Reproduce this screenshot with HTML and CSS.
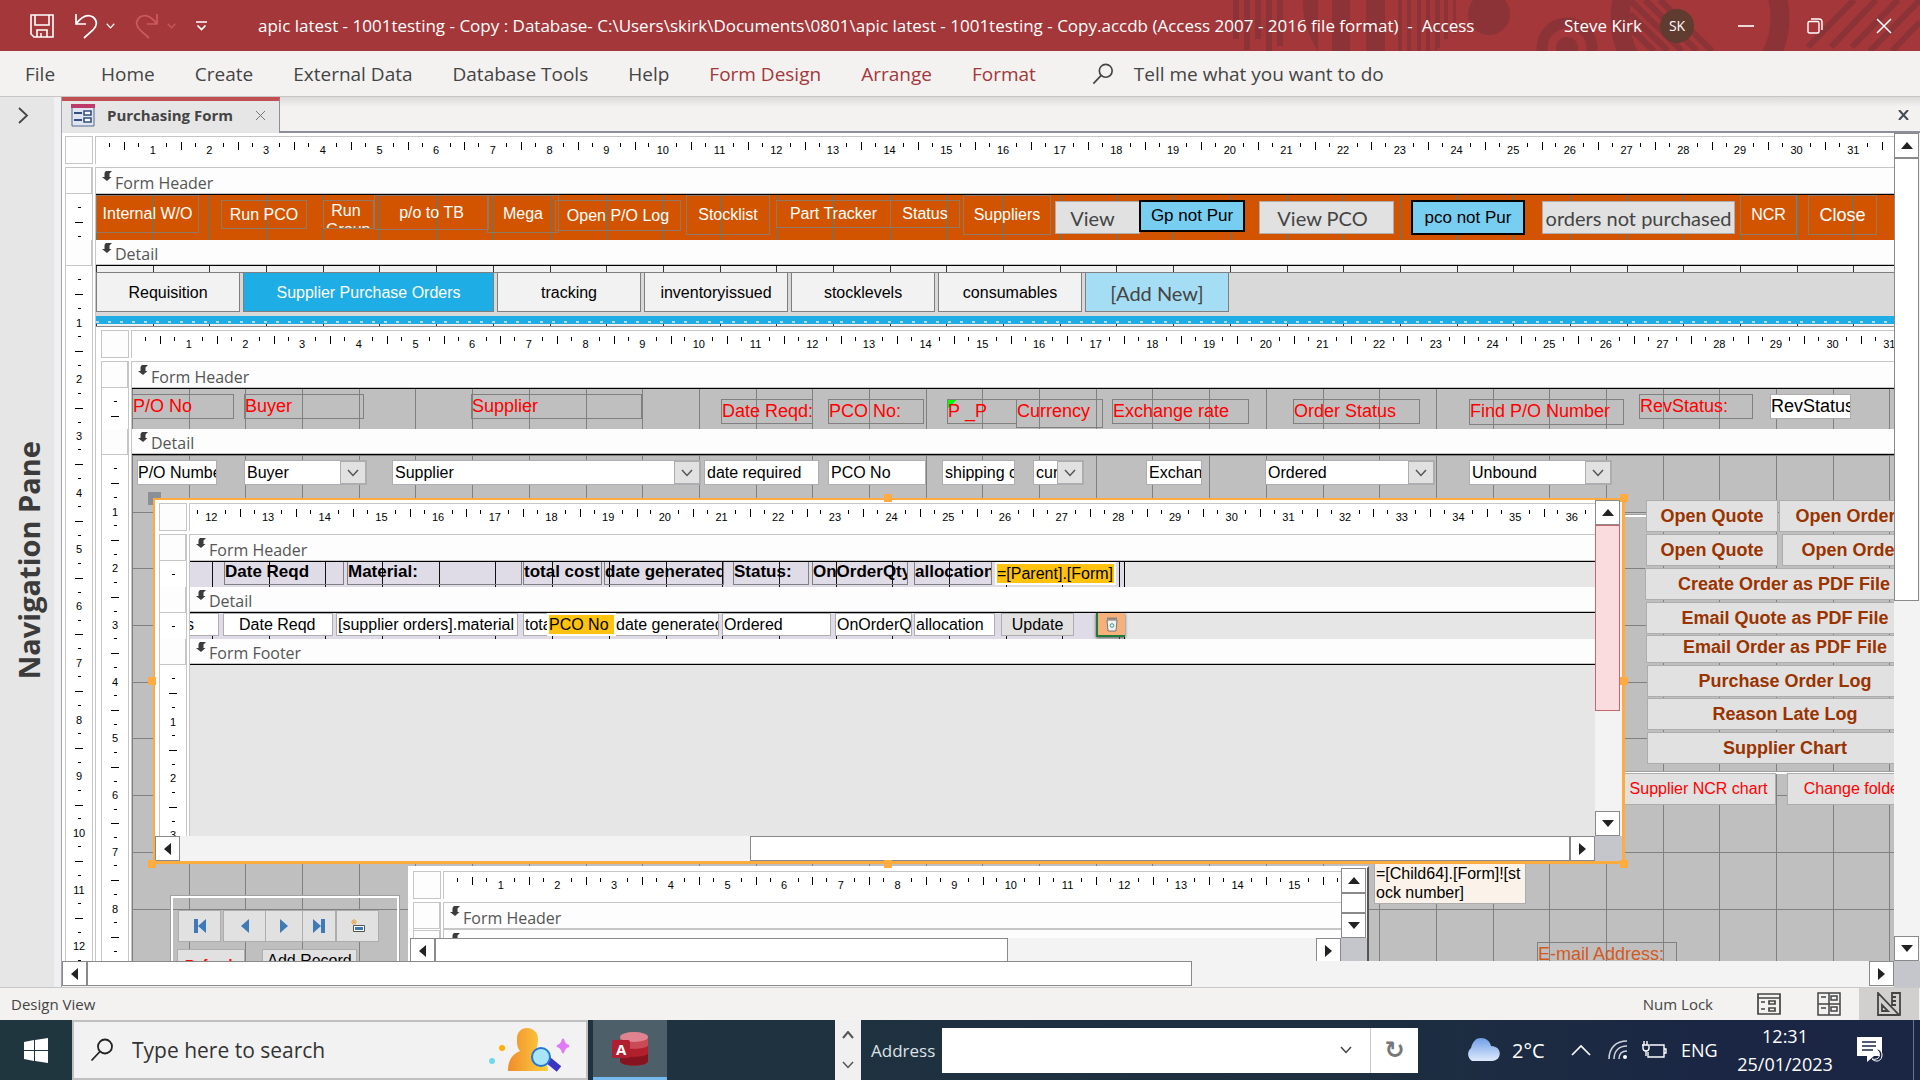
FILE: index.html
```html
<!DOCTYPE html>
<html lang="en">
<head>
<meta charset="utf-8">
<title>Purchasing Form - Access</title>
<link rel="stylesheet" href="styles.css">
</head>
<body>
<svg class="defs" aria-hidden="true">
  <symbol id="sel" viewBox="0 0 10 10"><path d="M4 0h6L7.500 2.500V6H9.500L5 10 0 6H2.500V2.500Q2.500 1 4 0Z" fill="#3b3b3b"/></symbol>
  <symbol id="up" viewBox="0 0 12 7"><path d="M6 0l6 7H0z" fill="#222"/></symbol>
  <symbol id="down" viewBox="0 0 12 7"><path d="M6 7L0 0h12z" fill="#222"/></symbol>
  <symbol id="left" viewBox="0 0 7 12"><path d="M0 6l7-6v12z" fill="#222"/></symbol>
  <symbol id="right" viewBox="0 0 7 12"><path d="M7 6L0 0v12z" fill="#222"/></symbol>
  <symbol id="chev" viewBox="0 0 12 8"><path d="M1 1l5 5.500L11 1" fill="none" stroke="currentColor" stroke-width="1.500"/></symbol>
  <symbol id="lens" viewBox="0 0 24 24"><circle cx="15" cy="8.500" r="7" fill="none" stroke="currentColor" stroke-width="1.800"/><path d="M10 13.500L1.500 22.500" stroke="currentColor" stroke-width="1.800"/></symbol>
</svg>

<header class="titlebar">
  <svg class="deco" width="690" height="51" viewBox="0 0 690 51" aria-hidden="true">
    <g fill="#8b3337"><path d="M3 0h6v39H3zM14 0h6v50h-6zM25 0h6v39h-6zM36 0h6v51h-6zM47 0h6v46h-6zM73 0h15v51C78 34 72 18 73 0zM102 0h18v51h-18zM136 0h19v51h-19zM168 0h4v51h-4zM177 0h4v51h-4zM187 0h4v51h-4zM196 0h4v51h-4zM205 0h5v47l-5 4zM214 0h4v39h-4zM223 0h3v34h-3z"/>
    <circle cx="259" cy="14" r="21"/><circle cx="337" cy="48" r="11"/></g>
    <g fill="none" stroke="#8b3337"><circle cx="337" cy="48" r="25" stroke-width="11"/><circle cx="470" cy="18" r="80" stroke-width="19"/>
    <g stroke-width="6"><path d="M400 0l52 51M415 0l52 51M430 0l52 51M400 14l38 37M400 28l24 23"/><path d="M578 47L624 0M601 47L646 0M622 47L668 0M640 51L690 0M662 51L690 22"/></g></g>
  </svg>
  <div class="qat">
    <button aria-label="Save"><svg width="24" height="24" viewBox="0 0 24 24"><path d="M1 1h22v22H4l-3-3zM5 1v10h14V1M7 23v-7h10v7M11 19v4" fill="none" stroke="#fff" stroke-width="1.600"/></svg></button>
    <button class="undo" aria-label="Undo"><svg width="24" height="26" viewBox="0 0 24 26"><path d="M2 1v10h10M2 11C8 3 14 1 19 4c5 4 4 9 0 13l-9 8" fill="none" stroke="#fff" stroke-width="1.700"/></svg><svg width="9" height="6"><use href="#chev"/></svg></button>
    <button class="redo" aria-label="Redo"><svg width="24" height="26" viewBox="0 0 24 26"><path d="M22 1v10H12M22 11C16 3 10 1 5 4c-5 4-4 9 0 13l9 8" fill="none" stroke="currentColor" stroke-width="1.700"/></svg><svg width="9" height="6"><use href="#chev"/></svg></button>
    <button aria-label="Customize Quick Access Toolbar"><svg width="11" height="10" viewBox="0 0 11 10"><path d="M0 1h11M1.500 4.500l4 4 4-4" fill="none" stroke="#fff" stroke-width="1.700"/></svg></button>
  </div>
  <h1 class="title">apic latest - 1001testing - Copy : Database- C:\Users\skirk\Documents\0801\apic latest - 1001testing - Copy.accdb (Access 2007 - 2016 file format) &nbsp;-&nbsp; Access</h1>
  <span class="user">Steve Kirk</span><span class="avatar">SK</span>
  <div class="winbtns">
    <button aria-label="Minimize"><svg width="16" height="16"><path d="M0 8h16" stroke="#fff" stroke-width="1.600"/></svg></button>
    <button aria-label="Restore"><svg width="16" height="16" viewBox="0 0 16 16"><path d="M1 5q0-1.500 1.500-1.500h8Q12 3.500 12 5v8.500q0 1.500-1.500 1.500h-8Q1 15 1 13.500zM4 1h8q3 0 3 3v8" fill="none" stroke="#fff" stroke-width="1.400"/></svg></button>
    <button aria-label="Close"><svg width="16" height="16"><path d="M1 1l14 14M15 1L1 15" stroke="#fff" stroke-width="1.500"/></svg></button>
  </div>
</header>

<nav class="ribbon">
  <a class="file" href="#">File</a><a href="#">Home</a><a href="#">Create</a><a href="#">External Data</a><a href="#">Database Tools</a><a href="#">Help</a><a class="ctx" href="#">Form Design</a><a class="ctx" href="#">Arrange</a><a class="ctx" href="#">Format</a>
  <button class="tell"><svg width="22" height="24"><use href="#lens"/></svg>Tell me what you want to do</button>
</nav>

<main class="work">
  <aside class="navpane">
    <button aria-label="Open Navigation Pane"><svg width="11" height="17" viewBox="0 0 11 17"><path d="M1 1l8 7.500L1 16" fill="none" stroke="#444" stroke-width="1.800"/></svg></button>
    <span>Navigation Pane</span>
  </aside>
  <section class="doc">
    <div class="tabstrip">
      <div class="doctab">
        <svg width="24" height="23" viewBox="0 0 24 23"><path d="M1 1h22v21H1z" fill="#dfe6f2" stroke="#55688f"/><path d="M0 0h24v4H0z" fill="#bd3a6b"/><path d="M3 9h8M3 16h8" stroke="#35507f" stroke-width="2"/><path d="M13 7h7v4h-7zM13 14h7v4h-7z" fill="#fff" stroke="#35507f" stroke-width="1.600"/></svg>
        <b>Purchasing Form</b>
        <button aria-label="Close tab"><svg width="11" height="11"><path d="M1 1l9 9M10 1L1 10" stroke="#777"/></svg></button>
      </div>
      <button class="closeall" aria-label="Close"><svg width="11" height="10"><path d="M1 0l9 10M10 0L1 10" stroke="#444a55" stroke-width="2"/></svg></button>
    </div>
    <div class="frame">
      <div class="form">
        <div class="hrow"><i class="corner"></i><div class="hruler"><span></span><span>1</span><span>2</span><span>3</span><span>4</span><span>5</span><span>6</span><span>7</span><span>8</span><span>9</span><span>10</span><span>11</span><span>12</span><span>13</span><span>14</span><span>15</span><span>16</span><span>17</span><span>18</span><span>19</span><span>20</span><span>21</span><span>22</span><span>23</span><span>24</span><span>25</span><span>26</span><span>27</span><span>28</span><span>29</span><span>30</span><span>31</span><span></span></div></div>
        <div class="sect">
          <div class="gutter"><i class="cell"></i><div class="vruler"><span></span><span></span></div></div>
          <div class="body">
            <div class="bar first"><svg><use href="#sel"/></svg>Form Header</div>
            <div class="canvas orange">
              <button class="o1">Internal W/O</button><button class="o2">Run PCO</button><button class="o3">Run Group</button><button class="o4">p/o to TB</button><button class="o5">Mega</button><button class="o6">Open P/O Log</button><button class="o7">Stocklist</button><button class="o8">Part Tracker</button><button class="o9">Status</button><button class="o10">Suppliers</button><button class="o11 grey">View</button><button class="o12 sky">Gp not Pur</button><button class="o13 grey">View PCO</button><button class="o14 sky">pco not Pur</button><button class="o15 grey">orders not purchased</button><button class="o16">NCR</button><button class="o17">Close</button>
            </div>
          </div>
        </div>
        <div class="sect grow">
          <div class="gutter"><i class="cell low"></i><div class="vruler"><span></span><span>1</span><span>2</span><span>3</span><span>4</span><span>5</span><span>6</span><span>7</span><span>8</span><span>9</span><span>10</span><span>11</span><span>12</span></div></div>
          <div class="body">
            <div class="bar"><svg><use href="#sel"/></svg>Detail</div>
            <div class="strip"></div>
            <div class="tabs"><button>Requisition</button><button class="on">Supplier Purchase Orders</button><button>tracking</button><button>inventoryissued</button><button>stocklevels</button><button>consumables</button><button class="add">[Add New]</button></div>
            <div class="dots"></div>
            <div class="strip thin"></div>

            <div class="form sub">
              <div class="hrow"><i class="corner"></i><div class="hruler"><span></span><span>1</span><span>2</span><span>3</span><span>4</span><span>5</span><span>6</span><span>7</span><span>8</span><span>9</span><span>10</span><span>11</span><span>12</span><span>13</span><span>14</span><span>15</span><span>16</span><span>17</span><span>18</span><span>19</span><span>20</span><span>21</span><span>22</span><span>23</span><span>24</span><span>25</span><span>26</span><span>27</span><span>28</span><span>29</span><span>30</span><span>31</span></div></div>
              <div class="sect">
                <div class="gutter"><i class="cell"></i><div class="vruler"><span></span><span></span></div></div>
                <div class="body">
                  <div class="bar first"><svg><use href="#sel"/></svg>Form Header</div>
                  <div class="canvas redhead">
                    <label class="l1" for="pono">P/O No</label><label class="l2" for="buyer">Buyer</label><label class="l3" for="supplier">Supplier</label><label class="l4" for="reqd">Date Reqd:</label><label class="l5" for="pco">PCO No:</label><label class="l6" for="ship">P&nbsp;_P</label><label class="l7" for="cur">Currency</label><label class="l8" for="rate">Exchange rate</label><label class="l9" for="ostat">Order Status</label><label class="l10" for="find">Find P/O Number</label><label class="l11" for="rev">RevStatus:</label><input class="l12" id="rev" value="RevStatus" readonly>
                  </div>
                </div>
              </div>
              <div class="sect grow">
                <div class="gutter"><i class="cell low"></i><div class="vruler"><span></span><span>1</span><span>2</span><span>3</span><span>4</span><span>5</span><span>6</span><span>7</span><span>8</span><span></span></div></div>
                <div class="body">
                  <div class="bar"><svg><use href="#sel"/></svg>Detail</div>
                  <div class="canvas detail">
                    <input class="f f1" id="pono" value="P/O Number" readonly>
                    <span class="f combo f2"><select id="buyer"><option>Buyer</option></select><i><svg><use href="#chev"/></svg></i></span>
                    <span class="f combo f3"><select id="supplier"><option>Supplier</option></select><i><svg><use href="#chev"/></svg></i></span>
                    <input class="f f4" id="reqd" value="date required" readonly>
                    <input class="f f5" id="pco" value="PCO No" readonly>
                    <input class="f f6" id="ship" value="shipping cost" readonly>
                    <span class="f combo f7"><select id="cur"><option>currency</option></select><i><svg><use href="#chev"/></svg></i></span>
                    <input class="f f8" id="rate" value="Exchange rate" readonly>
                    <span class="f combo f9"><select id="ostat"><option>Ordered</option></select><i><svg><use href="#chev"/></svg></i></span>
                    <span class="f combo f10"><select id="find"><option>Unbound</option></select><i><svg><use href="#chev"/></svg></i></span>

                    <div class="rule r1"></div><div class="rule r2"></div>
                    <button class="act a1">Open Quote</button><button class="act a2">Open Order</button><button class="act a3">Open Quote</button><button class="act a4">Open Order</button><button class="act a5">Create Order as PDF File</button><button class="act a6">Email Quote as PDF File</button><button class="act a7">Email Order as PDF File</button><button class="act a8">Purchase Order Log</button><button class="act a9">Reason Late Log</button><button class="act a10">Supplier Chart</button>
                    <button class="act red a11">Supplier NCR chart</button><button class="act red a12">Change folder</button>
                    <div class="child64">=[Child64].[Form]![stock number]</div>
                    <div class="email">E-mail Address:</div>

                    <div class="recbox"></div>
                    <button class="nb n1" aria-label="First record"><svg viewBox="0 0 14 14"><path d="M1 0h4v14H1zM13 0v14L5 7z"/></svg></button>
                    <button class="nb n2" aria-label="Previous record"><svg viewBox="0 0 14 14"><path d="M11 0v14L3 7z"/></svg></button>
                    <button class="nb n3" aria-label="Next record"><svg viewBox="0 0 14 14"><path d="M3 0v14l8-7z"/></svg></button>
                    <button class="nb n4" aria-label="Last record"><svg viewBox="0 0 14 14"><path d="M9 0h4v14H9zM1 0v14l8-7z"/></svg></button>
                    <button class="nb n5" aria-label="New record"><svg viewBox="0 0 14 14"><path d="M2.500 6.500h11v6h-11z" fill="#fff" stroke="#555"/><path d="M4 8h8v3H4z"/><path d="M3 0v6M0 3h6M1 1l4 4M5 1L1 5" stroke="#e9a94c"/></svg></button>
                    <button class="nb refresh">Refresh</button><button class="nb addrec">Add Record</button>

                    <div class="child">
                      <div class="form">
                        <div class="hrow"><i class="corner"></i><div class="hruler"><span></span><span>1</span><span>2</span><span>3</span><span>4</span><span>5</span><span>6</span><span>7</span><span>8</span><span>9</span><span>10</span><span>11</span><span>12</span><span>13</span><span>14</span><span>15</span><span></span></div></div>
                        <div class="sect"><div class="gutter"><i class="cell"></i></div><div class="body"><div class="bar first plain"><svg><use href="#sel"/></svg>Form Header</div></div></div>
                        <div class="sect"><div class="gutter"><i class="cell"></i></div><div class="body"><div class="bar"><svg><use href="#sel"/></svg></div></div></div>
                      </div>
                      <div class="vbar"><button aria-label="Scroll up"><svg><use href="#up"/></svg></button><div class="track"><i class="thumb full"></i></div><button aria-label="Scroll down"><svg><use href="#down"/></svg></button></div>
                      <div class="hbar"><button aria-label="Scroll left"><svg><use href="#left"/></svg></button><div class="track"><i class="thumb w65"></i></div><button aria-label="Scroll right"><svg><use href="#right"/></svg></button></div>
                      <i class="dead"></i>
                    </div>

                    <div class="selected">
                      <div class="form">
                        <div class="hrow"><i class="corner"></i><div class="hruler from12"><span>12</span><span>13</span><span>14</span><span>15</span><span>16</span><span>17</span><span>18</span><span>19</span><span>20</span><span>21</span><span>22</span><span>23</span><span>24</span><span>25</span><span>26</span><span>27</span><span>28</span><span>29</span><span>30</span><span>31</span><span>32</span><span>33</span><span>34</span><span>35</span><span>36</span></div></div>
                        <div class="sect">
                          <div class="gutter"><i class="cell"></i><div class="vruler"><span></span></div></div>
                          <div class="body"><div class="bar first"><svg><use href="#sel"/></svg>Form Header</div>
                            <div class="canvas lilac h25"><div class="area">
                              <label class="m1">Date Reqd</label><label class="m2">Material:</label><label class="m3">total cost</label><label class="m4">date generated</label><label class="m5">Status:</label><label class="m6">OnOrderQty</label><label class="m7">allocation</label><input class="m8" aria-label="Parent form" value="=[Parent].[Form]![PCO No]" readonly>
                            </div></div>
                          </div>
                        </div>
                        <div class="sect">
                          <div class="gutter"><i class="cell low"></i><div class="vruler"><span></span></div></div>
                          <div class="body"><div class="bar"><svg><use href="#sel"/></svg>Detail</div>
                            <div class="canvas lilac h26"><div class="area">
                              <input class="d0" aria-label="Notes" value="s" readonly><input class="d1" aria-label="Date Reqd" value="Date Reqd" readonly><input class="d2" aria-label="Material" value="[supplier orders].material" readonly><input class="d3" aria-label="total cost" value="total cost" readonly><input class="d5" aria-label="date generated" value="date generated" readonly><input class="d4" aria-label="PCO No" value="PCO No" readonly><input class="d6" aria-label="Status" value="Ordered" readonly><input class="d7" aria-label="OnOrderQty" value="OnOrderQty" readonly><input class="d8" aria-label="allocation" value="allocation" readonly><button class="d9">Update</button>
                              <button class="d10" aria-label="Delete"><svg width="12" height="15" viewBox="0 0 12 15"><path d="M1 3h10l-1 11H2z" fill="#f2f2f2" stroke="#777"/><path d="M1 1.500h10" stroke="#888" stroke-width="2"/><circle cx="6" cy="8.500" r="1.800" fill="none" stroke="#3a9a8a"/></svg></button>
                            </div></div>
                          </div>
                        </div>
                        <div class="sect grow">
                          <div class="gutter"><i class="cell low"></i><div class="vruler"><span></span><span>1</span><span>2</span><span>3</span></div></div>
                          <div class="body"><div class="bar"><svg><use href="#sel"/></svg>Form Footer</div><div class="canvas empty"></div></div>
                        </div>
                      </div>
                      <div class="vbar"><button aria-label="Scroll up"><svg><use href="#up"/></svg></button><div class="track"><i class="thumb pink"></i></div><button aria-label="Scroll down"><svg><use href="#down"/></svg></button></div>
                      <div class="hbar"><button aria-label="Scroll left"><svg><use href="#left"/></svg></button><div class="track"><i class="thumb w59"></i></div><button aria-label="Scroll right"><svg><use href="#right"/></svg></button></div>
                      <i class="dead"></i>
                      <b class="h tl"></b><b class="h tc"></b><b class="h tr"></b><b class="h ml"></b><b class="h mr"></b><b class="h bl"></b><b class="h bc"></b><b class="h br"></b>
                    </div>
                  </div>
                </div>
              </div>
            </div>
          </div>
        </div>
      </div>
      <div class="vbar"><button aria-label="Scroll up"><svg><use href="#up"/></svg></button><div class="track"><i class="thumb h57"></i></div><button aria-label="Scroll down"><svg><use href="#down"/></svg></button></div>
      <div class="hbar"><button aria-label="Scroll left"><svg><use href="#left"/></svg></button><div class="track"><i class="thumb w62"></i></div><button aria-label="Scroll right"><svg><use href="#right"/></svg></button></div>
      <i class="dead"></i>
    </div>
  </section>
</main>

<footer class="status">
  <span class="mode">Design View</span><span class="num">Num Lock</span>
  <button aria-label="Form View"><svg width="24" height="24" viewBox="0 0 24 24"><path d="M1 2h22v20H1zM1 6h22M4 10h4M4 17h4M12 9h6v3h-6zM12 16h6v3h-6z" fill="none" stroke="#444" stroke-width="1.700"/></svg></button>
  <button aria-label="Layout View"><svg width="24" height="24" viewBox="0 0 24 24"><path d="M1 1h22v22H1zM12 1v22M1 12h22M4 5h5M4 16h5M14 4h6v4h-6zM14 15h6v4h-6z" fill="none" stroke="#444" stroke-width="1.500"/></svg></button>
  <button class="on" aria-label="Design View"><svg width="24" height="24" viewBox="0 0 24 24"><path d="M1 1v22h21zM5 13v6h6zM15 14V1h8v22M15 5h4M15 9h4M15 13h4" fill="none" stroke="#444" stroke-width="1.800"/></svg></button>
</footer>

<div class="taskbar">
  <button class="start" aria-label="Start"><svg width="24" height="25" viewBox="0 0 24 25"><path d="M0 4l10-2v10H0zM11 2l13-2v12H11zM0 13h10v10L0 21zM11 13h13v12l-13-2z" fill="#fff"/></svg></button>
  <label class="search"><svg width="24" height="26"><use href="#lens"/></svg><input placeholder="Type here to search">
    <svg width="82" height="44" viewBox="0 0 82 44"><defs><linearGradient id="g" x2="1"><stop stop-color="#f08c2e"/><stop offset="1" stop-color="#ffd23c"/></linearGradient></defs><path d="M20 43c0-12 5-17 12-20-3-4-3-7-3-12 0-7 4-11 10-11s11 4 11 11c0 8-2 10-4 13 10 3 14 9 14 19z" fill="url(#g)"/><path d="M60 32l11 9" stroke="#3b34c4" stroke-width="7"/><circle cx="53" cy="29" r="9" fill="#a9e4f7" stroke="#2277d8" stroke-width="2"/><circle cx="14" cy="20" r="3" fill="#ffb000"/><circle cx="4" cy="33" r="3" fill="#6fd8ea"/><path d="M75 11q1 6 6 7-5 1-6 7-1-6-6-7 5-1 6-7z" fill="#e07bf5" stroke="#e07bf5" stroke-width="2"/></svg></label>
  <button class="access" aria-label="Access"><svg width="36" height="34" viewBox="0 0 36 34"><path d="M8 5v24c0 6 28 6 28 0V5z" fill="#b3202d"/><path d="M8 21v8c0 6 28 6 28 0v-8c0 5-28 5-28 0z" fill="#861420"/><path d="M8 5v8c0 5 28 5 28 0V5z" fill="#c94b57"/><ellipse cx="22" cy="5" rx="14" ry="5" fill="#e08390"/><rect y="8" width="18" height="18" rx="2" fill="#b01e30"/></svg><b>A</b></button>
  <div class="spin"><svg width="12" height="8" viewBox="0 0 12 8"><path d="M1 7l5-6 5 6" fill="none" stroke="currentColor" stroke-width="2"/></svg><svg width="12" height="8"><use href="#chev"/></svg></div>
  <label class="addr" for="address">Address</label>
  <div class="addrbox"><input id="address"><svg width="12" height="8"><use href="#chev"/></svg><button aria-label="Refresh">&#8635;</button></div>
  <div class="tray">
    <svg width="37" height="24" viewBox="0 0 37 24"><defs><linearGradient id="c" x2="0" y2="1"><stop stop-color="#6f9fe8"/><stop offset="1" stop-color="#dfeafb"/></linearGradient></defs><path d="M9 23a8 8 0 01-1-13C10 3 13 0 18 0s9 3 10 8c12 0 11 15 1 15z" fill="url(#c)"/></svg>
    <span class="temp">2°C</span>
    <svg class="up" width="20" height="12" viewBox="0 0 20 12"><path d="M1 11l9-9 9 9" fill="none" stroke="#fff" stroke-width="1.600"/></svg>
    <svg class="wifi" width="20" height="20" viewBox="0 0 20 20"><path d="M1 19C1 8 8 1 19 1M6 19C6 11 11 6 19 6M11 19c0-5 3-8 8-8" fill="none" stroke="#ccd3dc" stroke-width="1.500"/><circle cx="17" cy="17" r="2" fill="#fff"/></svg>
    <svg class="bat" width="25" height="18" viewBox="0 0 25 18"><path d="M8 4h14v12H6v-5M22 8h2v4h-2M2 0v4M5 0v4M0 4h7v3q0 3-3 3t-3-3V4M4 10v5" fill="none" stroke="#fff" stroke-width="1.400"/></svg>
    <span class="lang">ENG</span>
    <span class="clock">12:31<br>25/01/2023</span>
    <svg class="note" width="26" height="26" viewBox="0 0 26 26"><path d="M0 0h25v19h-8l-7 6v-6H0z" fill="#fff"/><path d="M5 5h14M5 9h14M5 13h11" stroke="#1b2842" stroke-width="1.500"/><path d="M19 12c6 4 4 12-4 10 4 4 10 2 10-4 0-3-2-6-6-6z" fill="#1b2842" stroke="#fff"/></svg>
    <i class="peek"></i>
  </div>
</div>
</body>
</html>
```
FILE: styles.css
```css
:root {
  --cm: 15mm; /* one ruler unit at 150% zoom */
  --ui: "Open Sans", "Noto Sans", sans-serif;
  --form: "Liberation Sans", Arial, sans-serif;
  --alt: Lato, "Open Sans", sans-serif;
}
* { box-sizing: border-box; }
body { margin: 0; height: 100vh; display: flex; flex-direction: column; overflow: hidden; font: 16px var(--ui); color: #444; background: #f3f2f1; }
button, input, select { font: inherit; color: inherit; margin: 0; padding: 0; border: 0; background: none; border-radius: 0; outline: 0; }
.defs { position: absolute; width: 0; height: 0; }

/* title bar */
.titlebar { position: relative; flex: none; height: 51px; display: flex; align-items: center; background: #a4373a; color: #fff; overflow: hidden; }
.deco { position: absolute; right: 0; top: 0; }
.titlebar > :not(.deco) { position: relative; }
.qat { display: flex; align-items: center; gap: 20px; width: 258px; padding-left: 30px; }
.qat button { display: flex; align-items: center; gap: 8px; }
.redo { color: #cc5a5f; }
.title { flex: 1; margin: 0; font: 17px var(--ui); white-space: nowrap; }
.user { margin-right: 18px; font-size: 17px; }
.avatar { width: 34px; height: 34px; margin-right: 44px; border-radius: 50%; background: #5f3b30; display: flex; align-items: center; justify-content: center; font-size: 14px; }
.winbtns { display: flex; gap: 53px; margin-right: 28px; }
.winbtns button { display: flex; }

/* ribbon tabs */
.ribbon { flex: none; height: 46px; display: flex; align-items: center; gap: 40px; padding-left: 25px; font-size: 19px; border-bottom: 1px solid #c8c6c4; }
.ribbon a { color: #444; text-decoration: none; white-space: nowrap; }
.ribbon .file { margin-right: 6px; }
.ribbon .ctx { color: #a4373a; }
.tell { display: flex; align-items: center; gap: 20px; margin-left: 16px; white-space: nowrap; }

/* work area */
.work { flex: 1; min-height: 0; display: flex; }
.navpane { flex: none; width: 62px; border-right: 1px solid #a0a5ae; background: linear-gradient(to right, #e6e6e6 54px, #f0f0f2 54px); display: flex; flex-direction: column; align-items: center; padding: 10px 4px 0 0; }
.navpane button { display: flex; margin: 0 0 10px -10px; }
.navpane span { margin: auto 0; writing-mode: vertical-rl; rotate: 180deg; font-size: 29px; font-weight: 700; color: #3b3b3b; }
.doc { flex: 1; min-width: 0; display: flex; flex-direction: column; }
.tabstrip { flex: none; height: 36px; display: flex; justify-content: space-between; border-bottom: 2px solid #8c8f98; background: linear-gradient(#dcdbda, #f3f2f1 10px); }
.doctab { width: 218px; height: 36px; display: flex; align-items: center; gap: 12px; padding: 0 0 4px 9px; border-top: 4px solid #c04e52; border-right: 1px solid #8c8f98; background: #e6e6e6; }
.doctab b { flex: 1; white-space: nowrap; font-size: 15px; }
.doctab button { display: flex; margin-right: 13px; }
.closeall { margin-right: 11px; }
.frame { flex: 1; min-height: 0; display: grid; grid-template: minmax(0, 1fr) 26px / minmax(0, 1fr) 26px; background: #fff; }

/* form designer */
.form { display: flex; flex-direction: column; min-width: 0; min-height: 0; overflow: hidden; padding: 3px 0 0 3px; background: #fff; }
.hrow, .sect { flex: none; display: flex; gap: 2px; }
.hrow { height: 28px; margin-bottom: 3px; }
.grow { flex: 1; min-height: 0; }
.corner { flex: none; width: 28px; border: 1px solid #c6c6c6; background: #fdfdfd; }
.gutter { flex: none; width: 28px; display: flex; flex-direction: column; overflow: hidden; border: solid #c6c6c6; border-width: 0 1px; background: #fff; }
.cell { flex: none; height: 27px; border: 1px solid #c6c6c6; border-left: 0; background: #fdfdfd; }
.cell.low { height: 26px; border-top: 0; }
.body { flex: 1; min-width: 0; display: flex; flex-direction: column; border-left: 1px solid #c6c6c6; }
.bar { flex: none; height: 26px; display: flex; align-items: center; gap: 3px; padding: 3px 0 0 6px; border-bottom: 1px solid #000; background: #fdfdfd; box-shadow: inset 0 -1px #c6c6c6; font: 16px/22px var(--ui); color: #555; }
.bar svg { width: 10px; height: 10px; margin-bottom: 13px; }
.first { height: 28px; border-top: 1px solid #c6c6c6; }
.plain { border-bottom-color: #c6c6c6; }
.hruler { flex: 1; display: flex; overflow: hidden; border: solid #c6c6c6; border-width: 1px 0 0 1px; font: 11px/26px var(--form); color: #000; }
.hruler span { flex: 0 0 var(--cm); text-align: center; background: linear-gradient(#000 0 0) 0 5px / 1px 8px, linear-gradient(#000 0 0) 25% 6px / 1px 4px, linear-gradient(#000 0 0) 75% 6px / 1px 4px; background-repeat: no-repeat; }
.hruler span:first-child { margin-left: calc(var(--cm) / -2); }
.hruler.from12 span:first-child { margin-left: -7px; }
.vruler { flex: 1; contain: size; display: flex; flex-direction: column; overflow: hidden; padding: 0 5px; font: 11px var(--form); color: #000; }
.vruler span { flex: 0 0 var(--cm); display: flex; align-items: center; justify-content: center; background: linear-gradient(#000 0 0) 50% 0 / 8px 1px, linear-gradient(#000 0 0) 50% 25% / 3px 1px, linear-gradient(#000 0 0) 50% 75% / 3px 1px; background-repeat: no-repeat; }
.vruler span:first-child { margin-top: calc(var(--cm) / -2); }
.canvas { position: relative; overflow: hidden; font: 16px var(--form); color: #000; }
.canvas button, .canvas label, .canvas input, .canvas .f { position: absolute; white-space: nowrap; overflow: hidden; }

/* scroll bars */
.vbar, .hbar { display: flex; background: #f3f3f3; min-width: 0; min-height: 0; }
.vbar { flex-direction: column; }
.vbar > button, .hbar > button { position: static; flex: none; display: flex; align-items: center; justify-content: center; width: 25px; height: 25px; border: 1px solid #8a8a8a; background: #fff; }
.vbar svg { width: 12px; height: 7px; }
.hbar svg { width: 7px; height: 12px; }
.track { flex: 1; display: flex; min-height: 0; }
.vbar .track { flex-direction: column; width: 25px; }
.hbar .track { height: 25px; }
.thumb { border: 1px solid #8a8a8a; background: #fff; }
.h57 { height: 57%; }
.w62 { width: 62%; }
.w65 { width: 65%; }
.w59 { width: 59%; margin-left: auto; }
.full { height: 100%; }
.pink { height: 65%; border-color: #c9686c; background: #fbdcde; }
.dead { background: #c5c6cb; }

/* header buttons of the main form */
.orange { height: 45px; color: #fff; background: repeating-linear-gradient(to right, #4c8087 0 1px, transparent 1px var(--cm)) #d35400; }
.orange button { border: 1px solid #8f7a68; }
.orange .grey { border-color: #adadad; background: #e1e1e1; color: #444; font: 20px var(--alt); }
.orange .sky { border: 2px solid #000; background: #78cef0; color: #000; font-size: 17px; }
.o1 { left: 0; top: 0; width: 103px; height: 38px; }
.o2 { left: 125px; top: 5px; width: 86px; height: 29px; }
.orange .o3 { left: 227px; top: 5px; width: 51px; height: 29px; white-space: normal; line-height: 19px; display: block; padding: 0 7px 0 2px; align-content: start; }
.o4 { left: 278px; top: 0; width: 115px; height: 35px; }
.o5 { left: 391px; top: 0; width: 72px; height: 38px; }
.o6 { left: 459px; top: 5px; width: 126px; height: 31px; }
.o7 { left: 590px; top: 0; width: 84px; height: 40px; }
.o8 { left: 680px; top: 5px; width: 115px; height: 28px; }
.o9 { left: 794px; top: 5px; width: 70px; height: 28px; }
.o10 { left: 867px; top: 0; width: 88px; height: 40px; }
.o11 { left: 959px; top: 6px; width: 85px; height: 33px; padding-right: 10px; }
.o12 { left: 1043px; top: 5px; width: 106px; height: 32px; }
.o13 { left: 1163px; top: 6px; width: 135px; height: 33px; padding-right: 8px; }
.o14 { left: 1315px; top: 5px; width: 114px; height: 35px; }
.o15 { left: 1446px; top: 6px; width: 193px; height: 33px; }
.o16 { left: 1644px; top: 0; width: 57px; height: 40px; }
.o17 { left: 1712px; top: 0; width: 69px; height: 40px; font-size: 18px; }

/* tab control */
.strip { flex: none; height: 6px; background: repeating-linear-gradient(to right, #333 0 1px, transparent 1px var(--cm)) #f0f0f0; }
.strip.thin { height: 3px; border-bottom: 1px solid #8a8a8a; }
.tabs { flex: none; height: 44px; display: flex; gap: 3px; padding-bottom: 4px; border-top: 1px solid #7f7f7f; background: #d9d9d9; font: 16px var(--form); color: #000; }
.tabs button { width: 144px; padding-top: 2px; border: solid #7f7f7f; border-width: 0 1px 1px; background: #f2f2f2; }
.tabs .on { width: 251px; background: #1eade4; color: #fff; }
.tabs .add { background: #a5def4; color: #444; font: 20px var(--alt); }
.dots { flex: none; height: 8px; background: linear-gradient(to right, #b9d9e5 3px, transparent 3px) 0 5px / 12px 2px repeat-x #1eade4; }

/* supplier purchase orders sub-form */
.sub { flex: 1; margin-left: 2px; }
.redhead { height: 40px; background: repeating-linear-gradient(to right, #808080 0 1px, transparent 1px var(--cm)) #bfbfbf; font-size: 18px; }
.redhead label { border: 1px solid #808080; color: #f00; line-height: 22px; }
.l1 { left: 0; top: 5px; width: 102px; height: 25px; }
.l2 { left: 112px; top: 5px; width: 120px; height: 25px; }
.l3 { left: 339px; top: 5px; width: 171px; height: 25px; }
.l4 { left: 589px; top: 10px; width: 92px; height: 25px; }
.l5 { left: 696px; top: 10px; width: 96px; height: 25px; }
.l6 { left: 815px; top: 10px; width: 70px; height: 25px; background: linear-gradient(135deg, #0f0 6px, transparent 6px); }
.l7 { left: 884px; top: 10px; width: 87px; height: 29px; }
.l8 { left: 980px; top: 10px; width: 137px; height: 25px; }
.l9 { left: 1161px; top: 10px; width: 127px; height: 25px; }
.l10 { left: 1337px; top: 10px; width: 155px; height: 26px; }
.l11 { left: 1507px; top: 5px; width: 114px; height: 25px; }
.redhead .l12 { left: 1638px; top: 5px; width: 81px; height: 25px; border: 1px solid #adadad; background: #fff; }
.detail { flex: 1; background: repeating-linear-gradient(to right, #808080 0 1px, transparent 1px var(--cm)), repeating-linear-gradient(#808080 0 1px, transparent 1px var(--cm)) #bfbfbf; }
.f { top: 5px; height: 25px; padding-left: 2px; border: 1px solid #adadb2; background: #fff; }
.combo { display: flex; }
.combo select { flex: 1; min-width: 0; appearance: none; }
.combo i { flex: none; width: 26px; display: flex; align-items: center; justify-content: center; border: 1px solid #adadad; background: #e1e1e1; color: #555; }
.combo svg { width: 12px; height: 8px; }
.detail .f1 { left: 5px; width: 80px; padding: 0; }
.f2 { left: 112px; width: 123px; }
.f3 { left: 260px; width: 309px; }
.f4 { left: 572px; width: 115px; }
.f5 { left: 696px; width: 98px; }
.f6 { left: 810px; width: 73px; }
.f7 { left: 901px; width: 51px; }
.f8 { left: 1014px; width: 56px; }
.f9 { left: 1133px; width: 170px; }
.f10 { left: 1337px; width: 143px; }

/* action buttons */
.detail .act { height: 32px; border: 1px solid #adadad; background: #e1e1e1; color: #993300; font-size: 18px; font-weight: 700; }
.a1 { left: 1514px; top: 45px; width: 132px; }
.a2 { left: 1647px; top: 45px; width: 133px; }
.a3 { left: 1514px; top: 79px; width: 132px; }
.a4 { left: 1650px; top: 79px; width: 139px; }
.a5 { left: 1513px; top: 113px; width: 278px; }
.a6 { left: 1514px; top: 147px; width: 278px; }
.detail .a7 { left: 1514px; top: 180px; width: 278px; height: 28px; padding-bottom: 4px; }
.a8 { left: 1515px; top: 210px; width: 276px; }
.a9 { left: 1515px; top: 243px; width: 276px; }
.a10 { left: 1515px; top: 277px; width: 276px; }
.detail .red { color: #f00; font-size: 16px; font-weight: 400; }
.a11 { left: 1489px; top: 318px; width: 155px; }
.a12 { left: 1655px; top: 318px; width: 134px; }
.rule { position: absolute; left: 1490px; height: 3px; border: solid #a0a0a0; border-width: 1px 0 0; background: #fff; }
.r1 { top: 59px; width: 24px; }
.r2 { top: 316px; width: 290px; }
.child64 { position: absolute; left: 1242px; top: 408px; width: 152px; height: 41px; overflow: hidden; border: 1px solid #adadad; background: #fbf3e9; font-size: 16px; line-height: 19px; word-break: break-all; padding-left: 1px; }
.email { position: absolute; left: 1405px; top: 487px; width: 140px; height: 26px; border: 1px solid #808080; color: #d35a1e; font-size: 18px; line-height: 22px; white-space: nowrap; }

/* record buttons */
.recbox { position: absolute; left: 39px; top: 441px; width: 228px; height: 90px; border: 2px solid #fff; outline: 1px solid #a0a0a0; }
.detail .nb { height: 32px; display: flex; align-items: center; justify-content: center; border: 1px solid #adadad; background: #e1e1e1; }
.nb svg { width: 14px; height: 14px; fill: #3f7ab8; }
.n1 { left: 46px; top: 455px; width: 43px; }
.n2 { left: 91px; top: 455px; width: 43px; }
.n3 { left: 133px; top: 455px; width: 38px; }
.n4 { left: 170px; top: 455px; width: 34px; }
.n5 { left: 204px; top: 455px; width: 43px; }
.detail .refresh { left: 45px; top: 494px; width: 68px; color: #f00; font-size: 14px; font-weight: 700; }
.detail .addrec { left: 130px; top: 494px; width: 95px; height: 28px; padding-bottom: 4px; }

/* nested forms placed on the canvas */
.child, .selected { position: absolute; display: grid; background: #fff; }
.child { left: 276px; top: 411px; width: 961px; height: 97px; grid-template: minmax(0, 1fr) 25px / minmax(0, 1fr) 26px; border: 2px solid #fff; border-right-color: #555; border-bottom: 0; }
.selected { left: 21px; top: 43px; width: 1472px; height: 366px; grid-template: minmax(0, 1fr) 25px / minmax(0, 1fr) 27px; border: solid #ffab40; border-width: 2px 3px 3px 2px; }
.selected .form { padding-left: 4px; }
.h { position: absolute; width: 8px; height: 8px; background: #ffab40; }
.h.tl { left: -7px; top: -8px; width: 13px; height: 13px; background: #8a8f98; clip-path: polygon(0 0, 100% 0, 100% 6px, 5px 6px, 5px 100%, 0 100%); }
.tc { left: 729px; top: -6px; }
.tr { right: -6px; top: -6px; }
.ml { left: -7px; top: 177px; }
.mr { right: -6px; top: 177px; }
.bl { left: -7px; bottom: -7px; }
.bc { left: 729px; bottom: -7px; }
.br { right: -6px; bottom: -7px; }
.lilac { background: #e6e6e6; }
.area { position: relative; width: 935px; height: 100%; border-right: 1px solid #000; background: repeating-linear-gradient(to right, #111 0 1px, transparent 1px var(--cm)) 22px 0 #dfdbe7; }
.h25 { height: 25px; }
.h26 { height: 26px; }
.empty { flex: 1; background: #e6e6e6; }
.area label { top: 0; height: 23px; border: 1px solid #808080; border-top: 0; font-size: 17px; font-weight: 700; line-height: 19px; }
.area input { top: 0; height: 23px; padding-left: 1px; border: 1px solid #adadb2; background: #fff; }
.m1 { left: 34px; width: 120px; }
.m2 { left: 157px; width: 175px; }
.m3 { left: 333px; width: 79px; }
.m4 { left: 414px; width: 120px; }
.m5 { left: 543px; width: 76px; }
.m6 { left: 622px; width: 96px; }
.m7 { left: 724px; width: 78px; }
.area .m8 { left: 805px; width: 121px; padding: 0; border: 2px solid #fff; background: #ffc20e; }
.d0 { left: -6px; width: 35px; }
.area .d1 { left: 33px; width: 110px; padding-left: 15px; }
.d2 { left: 146px; width: 182px; }
.d3 { left: 333px; width: 84px; }
.area .d4 { left: 357px; width: 69px; padding: 0; border: 2px solid #fff; background: #ffc20e; }
.d5 { left: 424px; width: 105px; }
.d6 { left: 532px; width: 109px; }
.d7 { left: 645px; width: 77px; }
.d8 { left: 724px; width: 81px; }
.d9 { left: 811px; top: 0; width: 73px; height: 23px; border: 1px solid #adadad; background: #e1e1e1; }
.area .d10 { left: 906px; top: 0; width: 29px; height: 24px; display: flex; align-items: center; justify-content: center; border: solid #1e7b3a; border-width: 0 0 2px 2px; background: #f6b07c; box-shadow: 0 1px 3px #555; }

/* status bar */
.status { flex: none; height: 33px; display: flex; align-items: center; border-top: 1px solid #c8c8c8; padding-left: 11px; font-size: 15px; }
.mode { flex: 1; }
.num { margin-right: 26px; }
.status button { width: 60px; height: 32px; display: flex; align-items: center; justify-content: center; }
.status .on { margin-right: 1px; background: #d2d0ce; }

/* task bar */
.taskbar { flex: none; height: 60px; display: flex; align-items: center; background: linear-gradient(to right, #20363f, #1e2f40 70%, #1a2644 90%); color: #fff; font-size: 18px; }
.start { width: 72px; display: flex; justify-content: center; }
.search { width: 516px; height: 60px; display: flex; align-items: center; gap: 18px; padding: 0 16px; border: 2px solid #c0c0c0; background: #f2f2f2; color: #222; }
.search input { flex: 1; min-width: 0; font-size: 21px; }
.search input::placeholder { color: #333; opacity: 1; }
.access { position: relative; width: 74px; height: 60px; margin-left: 5px; display: flex; align-items: center; justify-content: center; border-bottom: 3px solid #76b9ed; background: #4d6069; }
.access b { position: absolute; left: 23px; font-size: 15px; }
.spin { width: 26px; height: 60px; margin-left: 168px; display: flex; flex-direction: column; align-items: center; justify-content: space-between; padding: 11px 0; background: #f0f0f0; color: #555; }
.addr { width: 81px; padding-left: 10px; font-size: 17px; color: #dde2e6; }
.addrbox { flex: 1; height: 45px; display: flex; align-items: center; background: #fff; color: #444; }
.addrbox input { flex: 1; min-width: 0; height: 100%; }
.addrbox svg { margin-right: 18px; }
.addrbox button { width: 48px; height: 45px; border-left: 1px solid #ccc; font: 700 24px "DejaVu Sans", sans-serif; color: #777; }
.tray { width: 502px; height: 60px; display: flex; align-items: center; padding-left: 45px; }
.temp { width: 61px; padding-left: 12px; font-size: 20px; }
.up { margin-left: 10px; }
.wifi { margin-left: 17px; }
.bat { margin-left: 14px; }
.lang { width: 50px; margin-left: 14px; }
.clock { width: 108px; text-align: center; line-height: 28px; }
.note { margin-left: 18px; }
.peek { width: 1px; height: 60px; margin: 0 6px 0 auto; background: #6b7486; }
```
